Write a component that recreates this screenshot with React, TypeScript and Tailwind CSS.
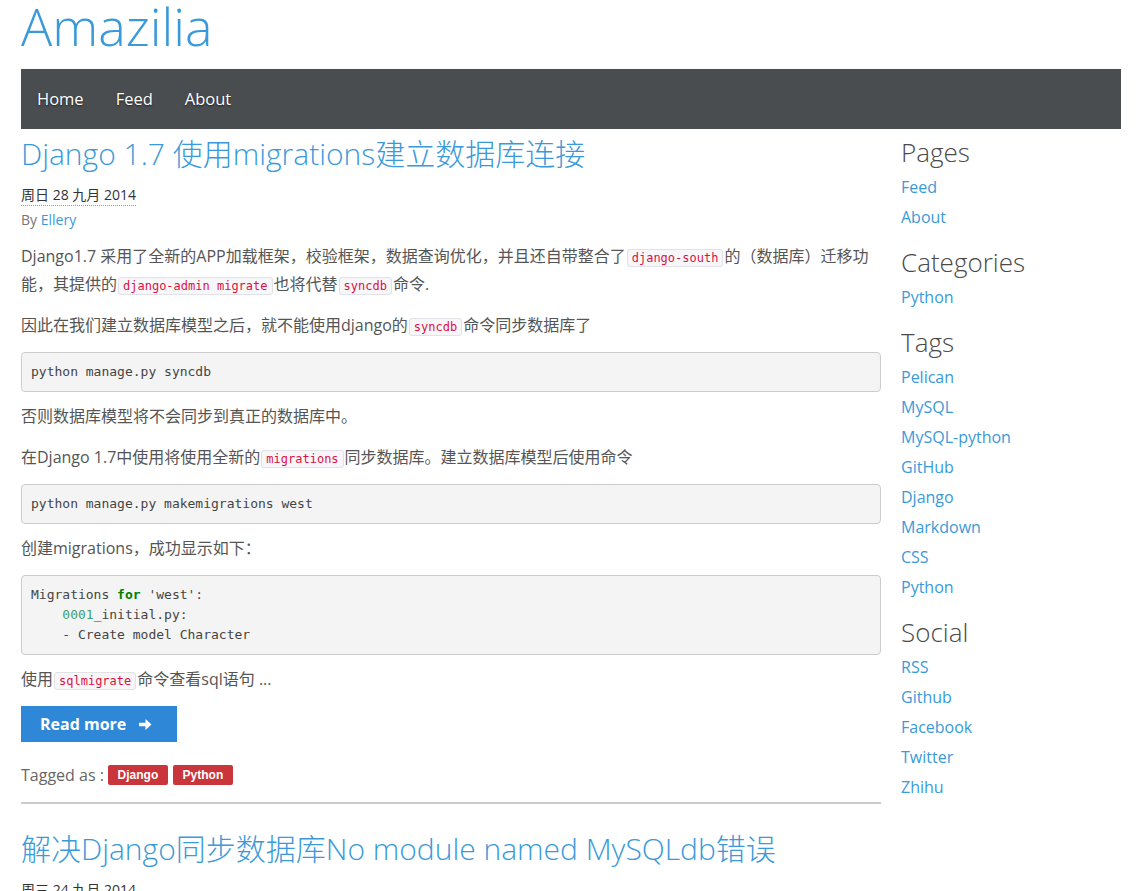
import React from "react";

const font = "font-['Open_Sans','Noto_Sans_CJK_SC',sans-serif]";
const mono = "font-['DejaVu_Sans_Mono','Liberation_Mono',monospace]";

function C({ children }: { children: React.ReactNode }) {
  return (
    <code
      className={`${mono} text-[12px] leading-[16px] text-[#dd1144] bg-[#f7f7f9] border border-[#e1e1e8] rounded-[3px] px-[4px] py-[1px] mx-[1px]`}
    >
      {children}
    </code>
  );
}

function Pre({ children }: { children: React.ReactNode }) {
  return (
    <pre
      className={`${mono} text-[13px] leading-[20px] text-[#444] bg-[#f4f4f4] border border-[#cccccc] rounded-[4px] px-[9px] py-[9px] mb-[10px] whitespace-pre`}
    >
      {children}
    </pre>
  );
}

function P({ children }: { children: React.ReactNode }) {
  return <p className="text-[16px] leading-[28px] text-[#555] mb-[13px]">{children}</p>;
}

function ArrowIcon() {
  return (
    <svg width="13" height="13" viewBox="0 0 14 14" className="inline-block">
      <path d="M0 5 H7 V1 L13.5 7 L7 13 V9 H0 Z" fill="white" />
    </svg>
  );
}

function SideSection({ title, links, first }: { title: string; links: string[]; first?: boolean }) {
  return (
    <div className={first ? "" : "mt-[15px]"}>
      <h3 className="text-[26px] leading-[30px] font-light text-[#4a4a4a] mb-[5px]">{title}</h3>
      <ul>
        {links.map((l) => (
          <li key={l} className="text-[16px] leading-[30px] text-[#3a9ad9]">
            {l}
          </li>
        ))}
      </ul>
    </div>
  );
}

export default function App() {
  return (
    <div className={`${font} bg-white min-h-[891px] overflow-hidden`}>
      <div className="w-[1100px] ml-[21px]">
        <h1 className="text-[52px] leading-[52px] font-light text-[#3a9ad9] mb-[17px]">Amazilia</h1>
        <nav className="h-[60px] bg-[#4a4d50] flex items-center">
          {["Home", "Feed", "About"].map((n) => (
            <span
              key={n}
              className="px-[16px] text-[16.5px] text-white [text-shadow:0_1px_2px_rgba(0,0,0,0.6)]"
            >
              {n}
            </span>
          ))}
        </nav>
        <div className="flex gap-[20px]">
          <main className="w-[860px]">
            <article>
              <h2 className="mt-[5px] text-[30px] leading-[40px] font-light text-[#3a9ad9]">
                Django 1.7 使用migrations建立数据库连接
              </h2>
              <div className="mt-[11px] h-[20px] text-[14px] leading-[20px] text-[#333]">
                <span className="border-b border-dotted border-[#999] pb-[1px]">周日 28 九月 2014</span>
              </div>
              <div className="mt-[5px] text-[14px] leading-[20px] text-[#777]">
                By <span className="text-[#3a9ad9]">Ellery</span>
              </div>
              <div className="mt-[12px]">
                <P>
                  Django1.7 采用了全新的APP加载框架，校验框架，数据查询优化，并且还自带整合了<C>django-south</C>的（数据库）迁移功能，其提供的<C>django-admin migrate</C>也将代替<C>syncdb</C>命令.
                </P>
                <P>
                  因此在我们建立数据库模型之后，就不能使用django的<C>syncdb</C>命令同步数据库了
                </P>
                <Pre>python manage.py syncdb</Pre>
                <P>否则数据库模型将不会同步到真正的数据库中。</P>
                <P>
                  在Django 1.7中使用将使用全新的<C>migrations</C>同步数据库。建立数据库模型后使用命令
                </P>
                <Pre>python manage.py makemigrations west</Pre>
                <P>创建migrations，成功显示如下：</P>
                <Pre>
                  {"Migrations "}
                  <span className="text-[#008000] font-bold">for</span>
                  {" 'west':\n    "}
                  <span className="text-[#40a070]">0001</span>
                  {"_initial.py:\n    - Create model Character"}
                </Pre>
                <P>
                  使用<C>sqlmigrate</C>命令查看sql语句 ...
                </P>
              </div>
              <div>
                <span className="inline-flex items-center h-[36px] w-[156px] pl-[19px] gap-[13px] bg-[#2f87d8] text-white font-bold text-[16px]">
                  Read more <ArrowIcon />
                </span>
              </div>
              <div className="mt-[19px] flex items-center h-[28px] text-[16px] text-[#666]">
                <span className="mr-[4px]">Tagged as :</span>
                <span className="font-['Liberation_Sans',Arial,sans-serif] font-bold text-[12px] text-white bg-[#c9353a] rounded-[2px] h-[20px] leading-[20px] w-[60px] text-center">
                  Django
                </span>
                <span className="ml-[5px] font-['Liberation_Sans',Arial,sans-serif] font-bold text-[12px] text-white bg-[#c9353a] rounded-[2px] h-[20px] leading-[20px] w-[60px] text-center">
                  Python
                </span>
              </div>
              <hr className="mt-[13px] border-0 border-t-2 border-[#cccccc]" />
            </article>
            <article>
              <h2 className="mt-[25px] text-[30px] leading-[40px] font-light text-[#3a9ad9]">
                解决Django同步数据库No module named MySQLdb错误
              </h2>
              <div className="mt-[11px] h-[20px] text-[14px] leading-[20px] text-[#333]">
                <span className="border-b border-dotted border-[#999] pb-[1px]">周三 24 九月 2014</span>
              </div>
            </article>
          </main>
          <aside className="w-[220px] pt-[8px]">
            <SideSection first title="Pages" links={["Feed", "About"]} />
            <SideSection title="Categories" links={["Python"]} />
            <SideSection
              title="Tags"
              links={["Pelican", "MySQL", "MySQL-python", "GitHub", "Django", "Markdown", "CSS", "Python"]}
            />
            <SideSection title="Social" links={["RSS", "Github", "Facebook", "Twitter", "Zhihu"]} />
          </aside>
        </div>
      </div>
    </div>
  );
}
